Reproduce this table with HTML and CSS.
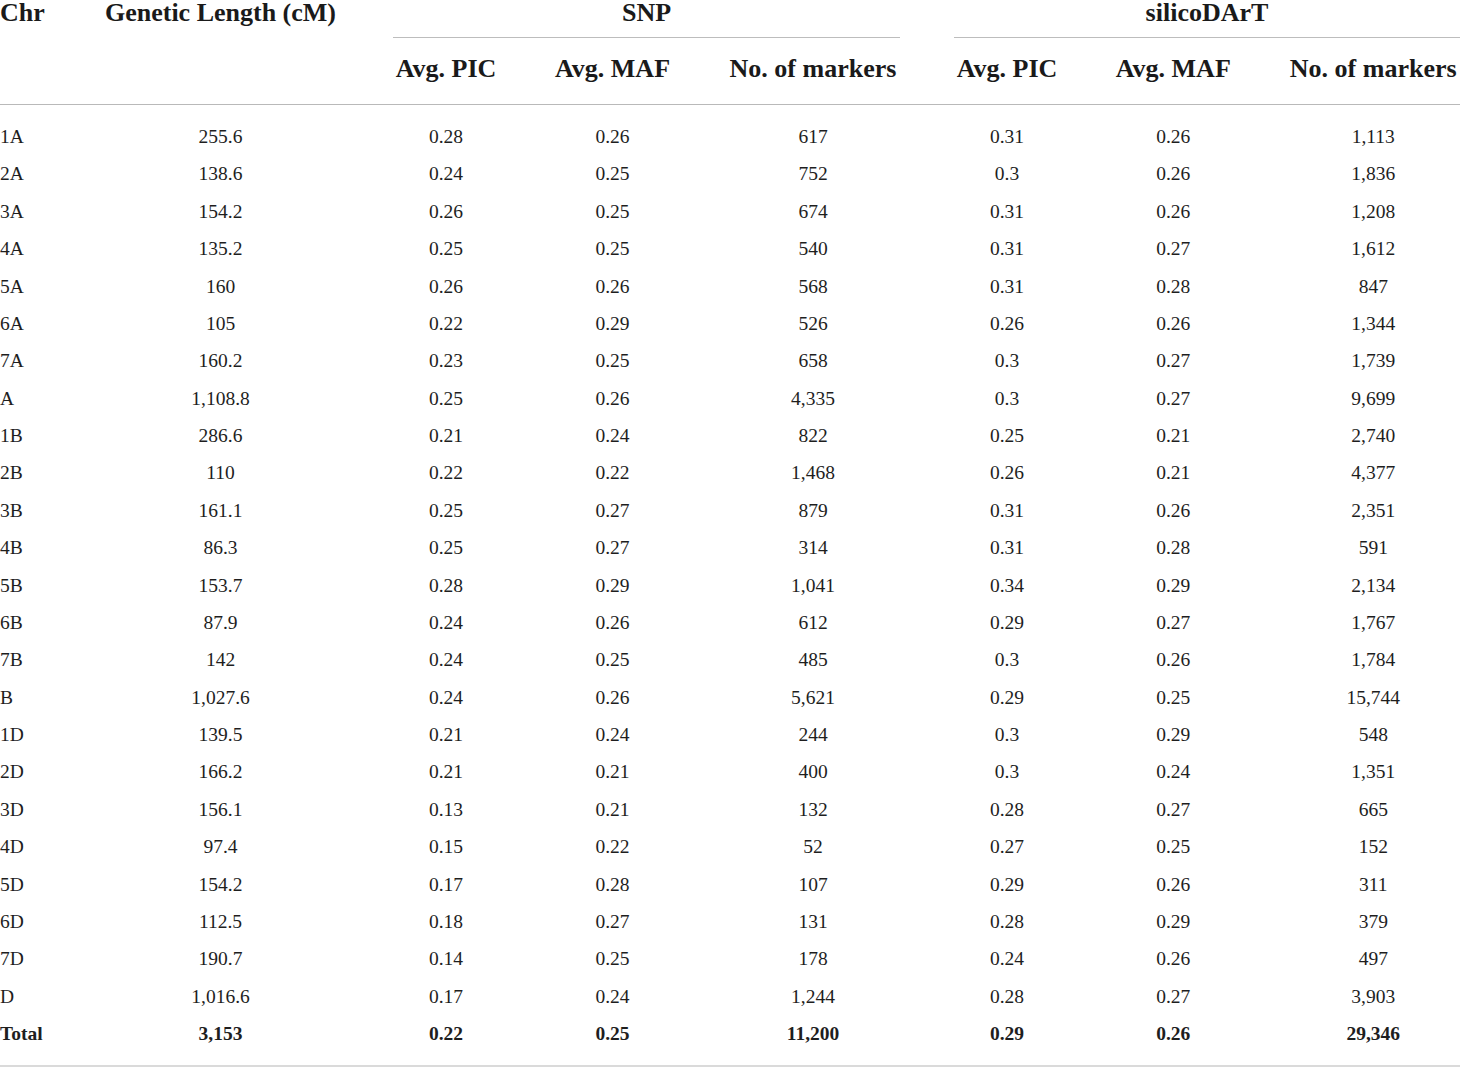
FILE: index.html
```html
<!DOCTYPE html>
<html lang="en">
<head>
    <meta charset="UTF-8">
    <title>Marker statistics by chromosome</title>
    <link rel="stylesheet" href="styles.css">
</head>
<body>
    <table class="markers">
        <colgroup>
            <col class="c-chr">
            <col class="c-len">
            <col class="c-pic">
            <col class="c-maf">
            <col class="c-num">
            <col class="c-pic">
            <col class="c-maf2">
            <col class="c-num2">
        </colgroup>
        <thead>
            <tr class="head-top">
                <th class="chr">Chr</th>
                <th>Genetic Length (cM)</th>
                <th colspan="3" class="group"><div>SNP</div></th>
                <th colspan="3" class="group"><div>silicoDArT</div></th>
            </tr>
            <tr class="head-sub">
                <th class="chr"></th>
                <th></th>
                <th>Avg. PIC</th>
                <th>Avg. MAF</th>
                <th>No. of markers</th>
                <th>Avg. PIC</th>
                <th>Avg. MAF</th>
                <th>No. of markers</th>
            </tr>
        </thead>
        <tbody>
            <tr class="first"><td class="chr">1A</td><td>255.6</td><td>0.28</td><td>0.26</td><td>617</td><td>0.31</td><td>0.26</td><td>1,113</td></tr>
            <tr><td class="chr">2A</td><td>138.6</td><td>0.24</td><td>0.25</td><td>752</td><td>0.3</td><td>0.26</td><td>1,836</td></tr>
            <tr><td class="chr">3A</td><td>154.2</td><td>0.26</td><td>0.25</td><td>674</td><td>0.31</td><td>0.26</td><td>1,208</td></tr>
            <tr><td class="chr">4A</td><td>135.2</td><td>0.25</td><td>0.25</td><td>540</td><td>0.31</td><td>0.27</td><td>1,612</td></tr>
            <tr><td class="chr">5A</td><td>160</td><td>0.26</td><td>0.26</td><td>568</td><td>0.31</td><td>0.28</td><td>847</td></tr>
            <tr><td class="chr">6A</td><td>105</td><td>0.22</td><td>0.29</td><td>526</td><td>0.26</td><td>0.26</td><td>1,344</td></tr>
            <tr><td class="chr">7A</td><td>160.2</td><td>0.23</td><td>0.25</td><td>658</td><td>0.3</td><td>0.27</td><td>1,739</td></tr>
            <tr><td class="chr">A</td><td>1,108.8</td><td>0.25</td><td>0.26</td><td>4,335</td><td>0.3</td><td>0.27</td><td>9,699</td></tr>
            <tr><td class="chr">1B</td><td>286.6</td><td>0.21</td><td>0.24</td><td>822</td><td>0.25</td><td>0.21</td><td>2,740</td></tr>
            <tr><td class="chr">2B</td><td>110</td><td>0.22</td><td>0.22</td><td>1,468</td><td>0.26</td><td>0.21</td><td>4,377</td></tr>
            <tr><td class="chr">3B</td><td>161.1</td><td>0.25</td><td>0.27</td><td>879</td><td>0.31</td><td>0.26</td><td>2,351</td></tr>
            <tr><td class="chr">4B</td><td>86.3</td><td>0.25</td><td>0.27</td><td>314</td><td>0.31</td><td>0.28</td><td>591</td></tr>
            <tr><td class="chr">5B</td><td>153.7</td><td>0.28</td><td>0.29</td><td>1,041</td><td>0.34</td><td>0.29</td><td>2,134</td></tr>
            <tr><td class="chr">6B</td><td>87.9</td><td>0.24</td><td>0.26</td><td>612</td><td>0.29</td><td>0.27</td><td>1,767</td></tr>
            <tr><td class="chr">7B</td><td>142</td><td>0.24</td><td>0.25</td><td>485</td><td>0.3</td><td>0.26</td><td>1,784</td></tr>
            <tr><td class="chr">B</td><td>1,027.6</td><td>0.24</td><td>0.26</td><td>5,621</td><td>0.29</td><td>0.25</td><td>15,744</td></tr>
            <tr><td class="chr">1D</td><td>139.5</td><td>0.21</td><td>0.24</td><td>244</td><td>0.3</td><td>0.29</td><td>548</td></tr>
            <tr><td class="chr">2D</td><td>166.2</td><td>0.21</td><td>0.21</td><td>400</td><td>0.3</td><td>0.24</td><td>1,351</td></tr>
            <tr><td class="chr">3D</td><td>156.1</td><td>0.13</td><td>0.21</td><td>132</td><td>0.28</td><td>0.27</td><td>665</td></tr>
            <tr><td class="chr">4D</td><td>97.4</td><td>0.15</td><td>0.22</td><td>52</td><td>0.27</td><td>0.25</td><td>152</td></tr>
            <tr><td class="chr">5D</td><td>154.2</td><td>0.17</td><td>0.28</td><td>107</td><td>0.29</td><td>0.26</td><td>311</td></tr>
            <tr><td class="chr">6D</td><td>112.5</td><td>0.18</td><td>0.27</td><td>131</td><td>0.28</td><td>0.29</td><td>379</td></tr>
            <tr><td class="chr">7D</td><td>190.7</td><td>0.14</td><td>0.25</td><td>178</td><td>0.24</td><td>0.26</td><td>497</td></tr>
            <tr><td class="chr">D</td><td>1,016.6</td><td>0.17</td><td>0.24</td><td>1,244</td><td>0.28</td><td>0.27</td><td>3,903</td></tr>
            <tr class="total"><td class="chr">Total</td><td>3,153</td><td>0.22</td><td>0.25</td><td>11,200</td><td>0.29</td><td>0.26</td><td>29,346</td></tr>
        </tbody>
    </table>
</body>
</html>
```

FILE: styles.css
```css
/* General Styles */
body {
    margin: 0;
    padding: 0;
    background: #fff;
    color: #1e1e1e;
    font-family: 'Liberation Serif', 'Times New Roman', serif;
}

.markers {
    width: 1460px;
    table-layout: fixed;
    border-collapse: separate;
    border-spacing: 0;
}

/* Column widths */
.c-chr { width: 75px; }
.c-len { width: 291px; }
.c-pic { width: 160px; }
.c-maf { width: 173px; }
.c-num { width: 228px; }
.c-maf2 { width: 172.5px; }
.c-num2 { width: 200.5px; }

th,
td {
    padding: 0 27px;
    text-align: center;
    white-space: nowrap;
}

th:first-child,
td:first-child {
    padding-left: 0;
}

th:last-child,
td:last-child {
    padding-right: 0;
}

.chr {
    text-align: left;
}

/* Header */
th {
    font-size: 26px;
    font-weight: bold;
    line-height: 26px;
    color: #1a1a1a;
}

.head-top th {
    vertical-align: top;
}

.group div {
    padding-bottom: 11px;
    border-bottom: 1px solid #bdbdbd;
}

.head-sub th {
    padding-top: 18px;
    padding-bottom: 22px;
    border-bottom: 1px solid #b9b9b9;
}

/* Body */
td {
    font-size: 19.5px;
    line-height: 37.375px;
}

.first td {
    padding-top: 13px;
}

.total td {
    font-weight: bold;
    padding-bottom: 13px;
    border-bottom: 2px solid #dadada;
}
```
